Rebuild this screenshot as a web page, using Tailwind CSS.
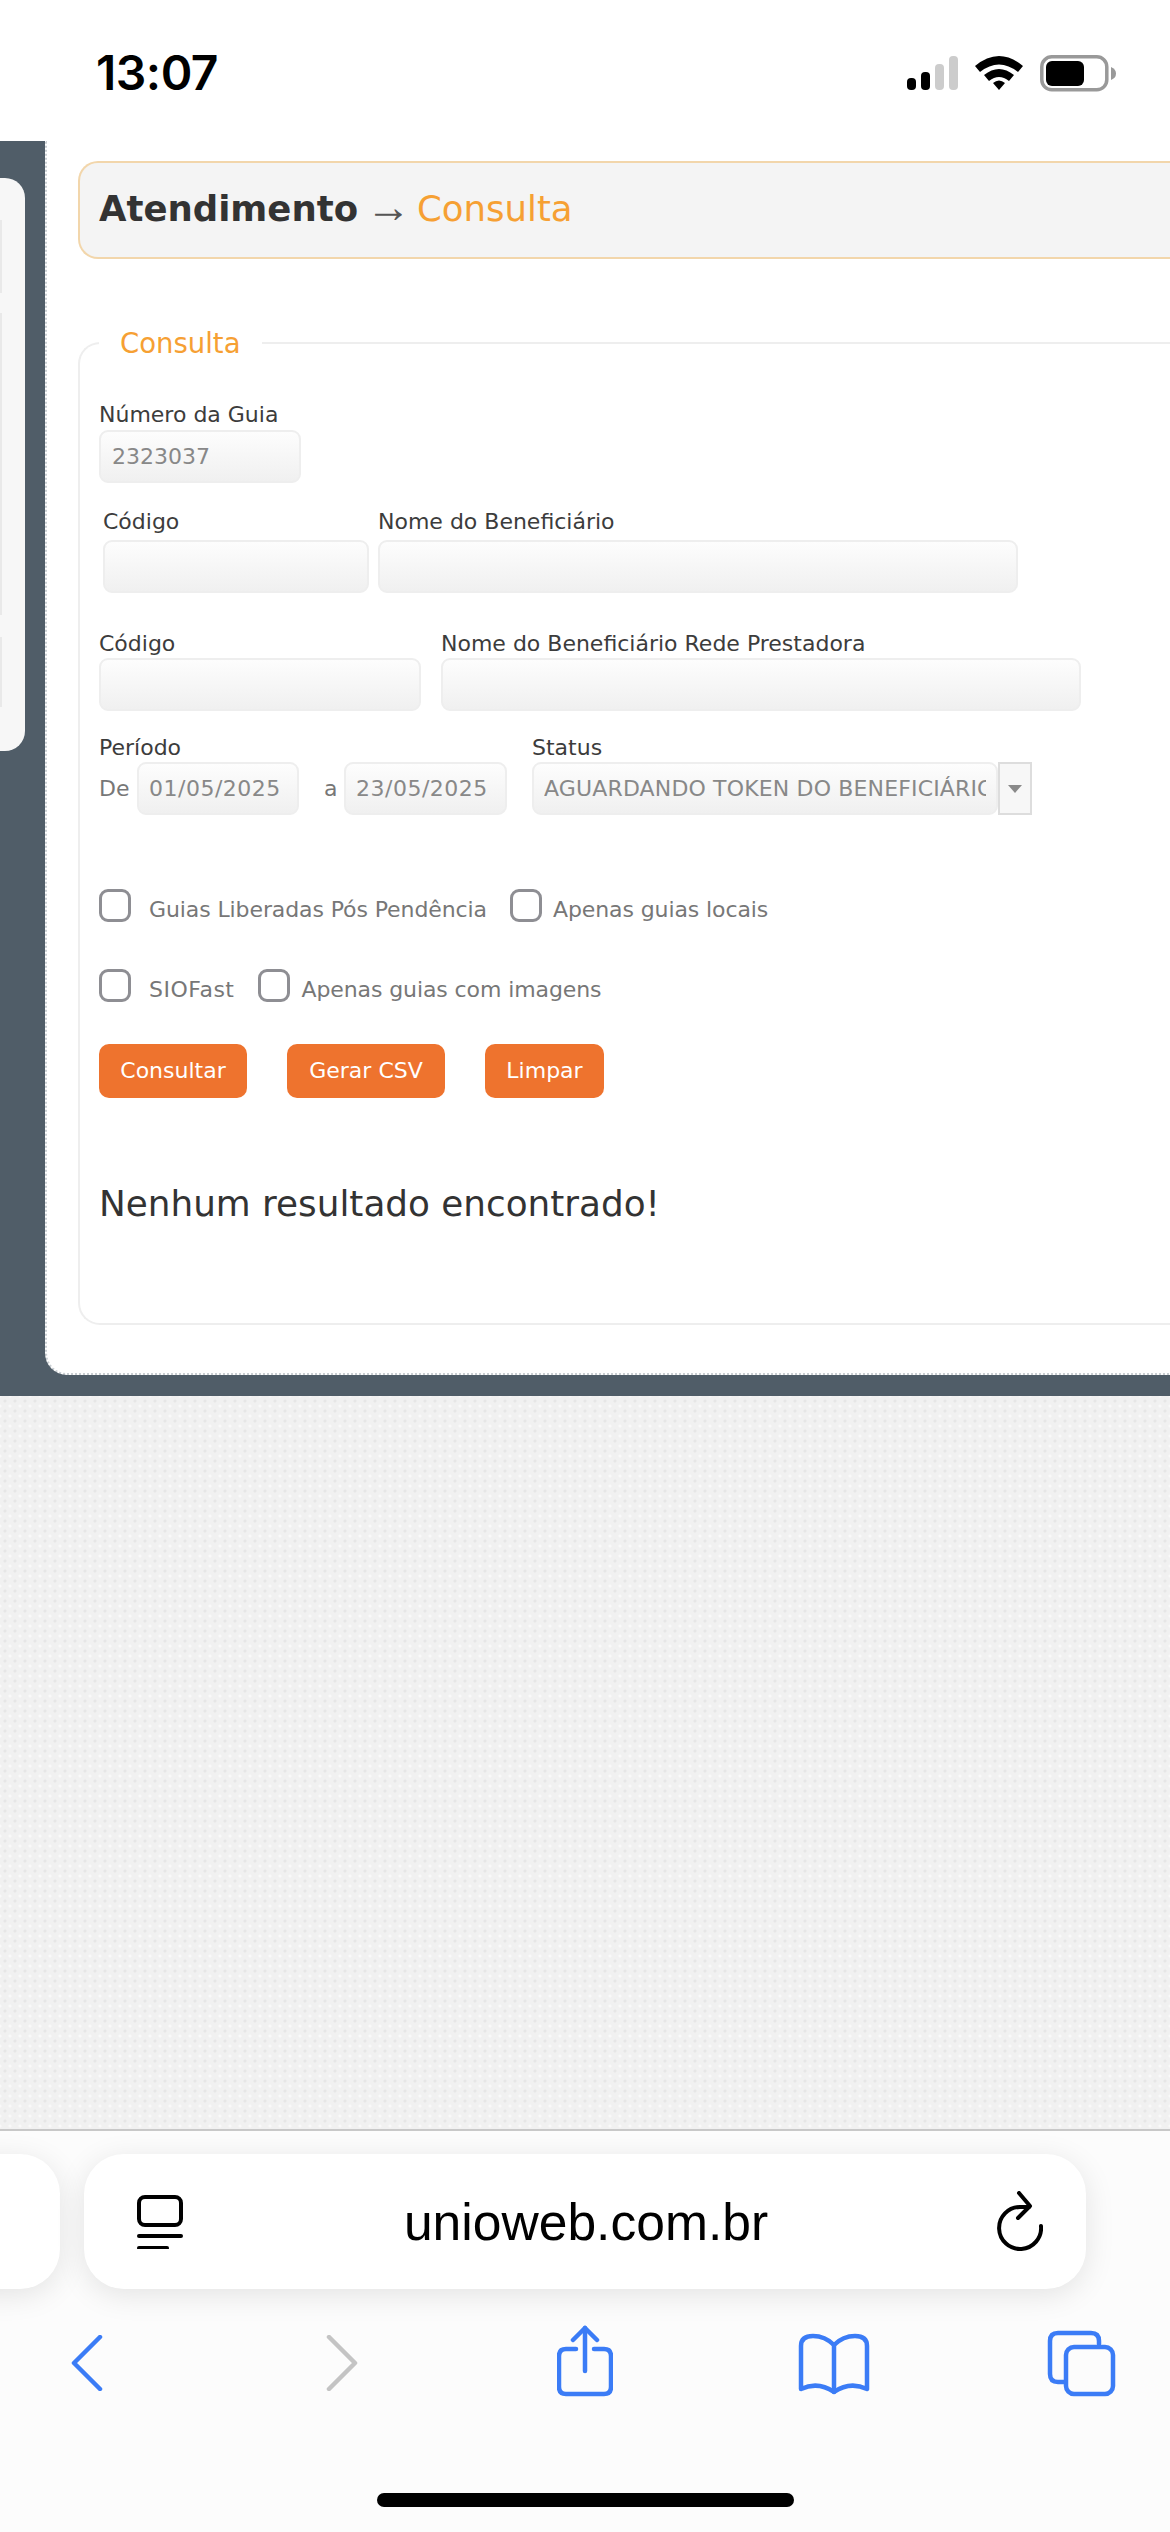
<!DOCTYPE html>
<html lang="pt-BR">

<head>
    <meta charset="UTF-8">
    <meta name="viewport" content="width=device-width, initial-scale=1.0">
    <title>Consulta</title>
    <script src="https://cdn.jsdelivr.net/npm/@tailwindcss/browser@4"></script>
</head>

<body class="bg-white">
    <div class="flex flex-col w-[1170px] h-[2532px] overflow-hidden font-['DejaVu_Sans',sans-serif]">

        <!-- Status bar -->
        <div class="flex items-center justify-between h-[141px] shrink-0 bg-white pl-[96px] pr-[53px] pt-[5px]">
            <span class="text-[48px] leading-[48px] font-semibold text-black font-['Inter',sans-serif] tracking-[-0.5px]">13:07</span>
            <svg width="210" height="40" viewBox="0 0 210 40" class="mt-[2px]">
                <rect x="0" y="24" width="9" height="12" rx="4" fill="#000" />
                <rect x="14" y="18" width="9" height="18" rx="4" fill="#000" />
                <rect x="28" y="10" width="9" height="26" rx="4" fill="#ccc" />
                <rect x="42" y="2" width="9" height="34" rx="4" fill="#ccc" />
                <path d="M68 12 Q92 -8 116 12 L111 18 Q92 3 73 18 Z" fill="#000" />
                <path d="M77 21 Q92 9 107 21 L102 27 Q92 19 82 27 Z" fill="#000" />
                <path d="M86 29 Q92 24 98 29 L92 36 Z" fill="#000" />
                <rect x="134.8" y="2.8" width="65" height="33" rx="10" fill="none" stroke="#999" stroke-width="3.5" />
                <rect x="139" y="7" width="38" height="25" rx="6" fill="#000" />
                <path d="M204 13 Q209 15 209 19.500 Q209 24 204 26 Z" fill="#999" />
            </svg>
        </div>

        <!-- Page -->
        <div class="flex h-[1255px] shrink-0 bg-[#505d68]">
            <div class="flex flex-col items-start shrink-0 w-[25px] h-[573px] mt-[37px] bg-[#f7f7f7] rounded-r-[20px]">
                <div class="w-[2px] h-[73px] mt-[42px] bg-[#e9e9e9]"></div>
                <div class="w-[2px] h-[302px] mt-[20px] bg-[#e9e9e9]"></div>
                <div class="w-[2px] h-[70px] mt-[22px] bg-[#e9e9e9]"></div>
            </div>

            <div class="shrink-0 w-[1200px] h-[1234px] ml-[20px] pl-[31px] pt-[20px] bg-white border-l-2 border-b-2 border-dotted border-[#c9ced2] rounded-bl-[22px]">
                <div class="flex items-center h-[98px] pl-[19px] pb-[2px] bg-[#f4f4f4] border-2 border-r-0 border-[#f2d6ab] rounded-l-[20px] text-[35.500px]">
                    <span class="font-bold text-[#333]">Atendimento</span>
                    <span class="ml-[8px] mr-[6px] -mt-[6px] text-[45px] leading-none font-['Liberation_Sans',sans-serif] text-[#555]">→</span>
                    <span class="text-[#f6a033]">Consulta</span>
                </div>

                <fieldset class="mt-[67px] h-[999px] pl-[19px] border-2 border-r-0 border-[#eeeeee] rounded-l-[22px] text-[22px] leading-[28px] text-[#3c3c3c]">
                    <legend class="px-[21px] text-[27.500px] leading-[34px] text-[#f6a033]">Consulta</legend>

                    <div class="mt-[41px]">
                        <div class="h-[28px]">Número da Guia</div>
                        <div class="flex items-center w-[202px] h-[53px] mt-[1px] pl-[11px] border-2 border-[#eeeeee] rounded-[9px] bg-gradient-to-b from-[#fdfdfd] to-[#f0f0f0] text-[#888]">2323037</div>
                    </div>

                    <div class="flex gap-[9px] mt-[25px] ml-[4px]">
                        <div>
                            <div class="h-[28px]">Código</div>
                            <div class="w-[266px] h-[53px] mt-[4px] border-2 border-[#eeeeee] rounded-[9px] bg-gradient-to-b from-[#fdfdfd] to-[#f0f0f0]"></div>
                        </div>
                        <div>
                            <div class="h-[28px]">Nome do Beneficiário</div>
                            <div class="w-[640px] h-[53px] mt-[4px] border-2 border-[#eeeeee] rounded-[9px] bg-gradient-to-b from-[#fdfdfd] to-[#f0f0f0]"></div>
                        </div>
                    </div>

                    <div class="flex gap-[20px] mt-[37px]">
                        <div>
                            <div class="h-[28px]">Código</div>
                            <div class="w-[322px] h-[53px] border-2 border-[#eeeeee] rounded-[9px] bg-gradient-to-b from-[#fdfdfd] to-[#f0f0f0]"></div>
                        </div>
                        <div>
                            <div class="h-[28px]">Nome do Beneficiário Rede Prestadora</div>
                            <div class="w-[640px] h-[53px] border-2 border-[#eeeeee] rounded-[9px] bg-gradient-to-b from-[#fdfdfd] to-[#f0f0f0]"></div>
                        </div>
                    </div>

                    <div class="flex mt-[23px]">
                        <div class="w-[433px] shrink-0">
                            <div class="h-[28px]">Período</div>
                            <div class="flex items-center h-[53px] text-[#777]">
                                <span class="w-[38px]">De</span>
                                <div class="flex items-center w-[162px] h-[53px] pl-[10px] border-2 border-[#eeeeee] rounded-[9px] bg-gradient-to-b from-[#fdfdfd] to-[#f0f0f0] text-[#888] tracking-[0.5px]">01/05/2025</div>
                                <span class="w-[45px] pl-[25px]">a</span>
                                <div class="flex items-center w-[163px] h-[53px] pl-[10px] border-2 border-[#eeeeee] rounded-[9px] bg-gradient-to-b from-[#fdfdfd] to-[#f0f0f0] text-[#888] tracking-[0.5px]">23/05/2025</div>
                            </div>
                        </div>
                        <div>
                            <div class="h-[28px]">Status</div>
                            <div class="flex h-[53px]">
                                <div class="flex items-center w-[466px] pl-[10px] pr-[10px] border-2 border-[#eeeeee] rounded-[9px] bg-gradient-to-b from-[#fdfdfd] to-[#f0f0f0] text-[#888] tracking-[0.15px] overflow-hidden whitespace-nowrap">
                                    <span class="block w-full overflow-hidden">AGUARDANDO TOKEN DO BENEFICIÁRIO</span>
                                </div>
                                <div class="flex items-center justify-center w-[34px] border-2 border-[#dddddd] bg-[#f7f7f7]">
                                    <svg width="14" height="8" viewBox="0 0 14 8"><path d="M0 0 H14 L7 8 Z" fill="#8a8a8a" /></svg>
                                </div>
                            </div>
                        </div>
                    </div>

                    <div class="flex items-start mt-[74px] text-[#777] tracking-[-0.1px]">
                        <span class="w-[32px] h-[33px] border-[3px] border-[#8e8e93] rounded-[9px]"></span>
                        <span class="ml-[18px] mt-[7px]">Guias Liberadas Pós Pendência</span>
                        <span class="w-[32px] h-[33px] ml-[23px] border-[3px] border-[#8e8e93] rounded-[9px]"></span>
                        <span class="ml-[11px] mt-[7px]">Apenas guias locais</span>
                    </div>

                    <div class="flex items-start mt-[45px] text-[#777] tracking-[-0.1px]">
                        <span class="w-[32px] h-[33px] border-[3px] border-[#8e8e93] rounded-[9px]"></span>
                        <span class="ml-[18px] mt-[7px] tracking-[0.5px]">SIOFast</span>
                        <span class="w-[32px] h-[33px] ml-[24px] border-[3px] border-[#8e8e93] rounded-[9px]"></span>
                        <span class="ml-[11px] mt-[7px]">Apenas guias com imagens</span>
                    </div>

                    <div class="flex gap-[40px] mt-[40px] text-white">
                        <button type="button" class="w-[148px] h-[54px] bg-[#ee732e] rounded-[10px]">Consultar</button>
                        <button type="button" class="w-[158px] h-[54px] bg-[#ee732e] rounded-[10px]">Gerar CSV</button>
                        <button type="button" class="w-[119px] h-[54px] bg-[#ee732e] rounded-[10px]">Limpar</button>
                    </div>

                    <p class="mt-[84px] text-[35.800px] leading-[44px] text-[#333]">Nenhum resultado encontrado!</p>
                </fieldset>
            </div>
        </div>

        <!-- Empty textured area -->
        <div class="h-[733px] shrink-0 bg-[#f1f1f1] bg-[radial-gradient(#e6e6e6_1px,transparent_2px),radial-gradient(#f9f9f9_1px,transparent_2px)] bg-size-[10px_10px] bg-position-[0_0,5px_5px]"></div>

        <!-- Safari toolbar -->
        <div class="relative flex-1 border-t-2 border-[#c8c8c8] bg-[#fcfcfc]">
            <div class="flex gap-[24px] mt-[23px] -ml-[60px]">
                <div class="shrink-0 w-[120px] h-[135px] bg-white rounded-[40px] shadow-[0_6px_30px_rgba(0,0,0,0.1)]"></div>
                <div class="flex items-center justify-between shrink-0 w-[1002px] h-[135px] pl-[53px] pr-[43px] bg-white rounded-[40px] shadow-[0_6px_30px_rgba(0,0,0,0.1)]">
                    <svg width="46" height="54" viewBox="0 0 46 54" fill="none" stroke="#000" stroke-width="4" stroke-linecap="round">
                        <rect x="2" y="2" width="42" height="28" rx="6" />
                        <path d="M2 41 H44" />
                        <path d="M2 53 H30" />
                    </svg>
                    <span class="mr-[8px] text-[51.600px] leading-[60px] text-black font-['Liberation_Sans',sans-serif]">unioweb.com.br</span>
                    <svg width="46" height="62" viewBox="0 0 46 62" fill="none" stroke="#000" stroke-width="4" stroke-linecap="round" stroke-linejoin="round">
                        <path d="M44 35 A21 21 0 1 1 23 16 L32 16" />
                        <path d="M22 2 L33 15 L21 27" />
                    </svg>
                </div>
            </div>

            <div class="flex items-start mt-[37px]">
                <svg width="32" height="56" viewBox="0 0 32 56" fill="none" stroke="#3b7cf6" stroke-width="4.500" stroke-linecap="round" stroke-linejoin="round" class="ml-[71px] mt-[9px]">
                    <path d="M29 2 L3 28 L29 54" />
                </svg>
                <svg width="32" height="56" viewBox="0 0 32 56" fill="none" stroke="#c4c4c4" stroke-width="4.500" stroke-linecap="round" stroke-linejoin="round" class="ml-[223px] mt-[9px]">
                    <path d="M3 2 L29 28 L3 54" />
                </svg>
                <svg width="56" height="72" viewBox="0 0 56 72" fill="none" stroke="#3b7cf6" stroke-width="4.500" stroke-linecap="round" stroke-linejoin="round" class="ml-[199px] -mt-[1px]">
                    <path d="M19 24 H9 Q2 24 2 31 V62 Q2 69 9 69 H47 Q54 69 54 62 V31 Q54 24 47 24 H37" />
                    <path d="M28 46 V3" />
                    <path d="M16 15 L28 3 L40 15" />
                </svg>
                <svg width="72" height="62" viewBox="0 0 72 62" fill="none" stroke="#3b7cf6" stroke-width="4.500" stroke-linecap="round" stroke-linejoin="round" class="ml-[185px] mt-[7px]">
                    <path d="M36 12 Q27 3 15 3 Q3 3 3 13 V56 Q20 48 36 59 Q52 48 69 56 V13 Q69 3 57 3 Q45 3 36 12 Z" />
                    <path d="M36 12 V59" />
                </svg>
                <svg width="70" height="68" viewBox="0 0 70 68" fill="none" stroke="#3b7cf6" stroke-width="4.500" stroke-linecap="round" stroke-linejoin="round" class="ml-[177px] mt-[4px]">
                    <path d="M52 14 V11 Q52 3 44 3 H11 Q3 3 3 11 V44 Q3 52 11 52 H18" />
                    <rect x="19" y="17" width="47" height="47" rx="8" />
                </svg>
            </div>

            <div class="absolute left-[377px] bottom-[25px] w-[417px] h-[14px] bg-black rounded-full"></div>
        </div>
    </div>
</body>

</html>
